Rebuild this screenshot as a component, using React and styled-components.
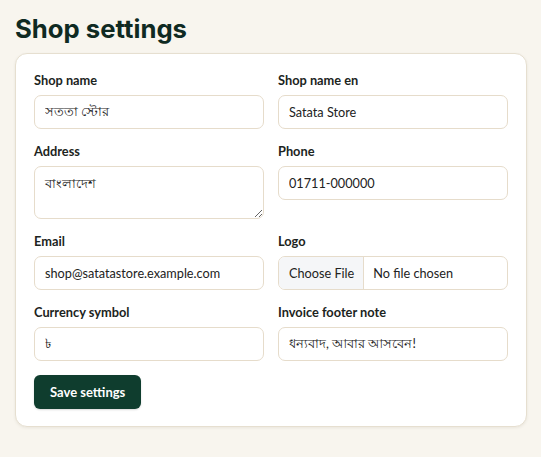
import React from "react";
import styled, { createGlobalStyle } from "styled-components";

const Global = createGlobalStyle`
  html, body { margin: 0; padding: 0; background: #f8f5ee; }
  body { font-family: Lato, "Noto Sans", sans-serif; color: #1c2421; }
  * { box-sizing: border-box; }
`;

const Page = styled.div`
  padding: 14px 15px 30px 15px;
`;

const Title = styled.h1`
  margin: 0 0 9px 0;
  font-family: Inter, "Noto Sans", sans-serif;
  font-weight: 700;
  font-size: 25.7px;
  line-height: 30px;
  letter-spacing: 0;
  color: #0f2a22;
`;

const Card = styled.form`
  width: 512px;
  background: #ffffff;
  border: 1px solid #e6dfd0;
  border-radius: 12px;
  padding: 17px 18px 17px 18px;
  box-shadow: 0 1px 3px rgba(60, 50, 30, 0.08);
`;

const Grid = styled.div`
  display: grid;
  grid-template-columns: 1fr 1fr;
  column-gap: 14px;
  row-gap: 13px;
  align-items: start;
`;

const Field = styled.label`
  display: flex;
  flex-direction: column;
  gap: 6px;
`;

const Label = styled.span`
  font-size: 12.8px;
  font-weight: 700;
  line-height: 18px;
  color: #1c2421;
`;

const fieldBase = `
  width: 100%;
  border: 1px solid #e6dccb;
  border-radius: 7px;
  background: #fff;
  font-family: Lato, "Noto Sans", sans-serif;
  font-size: 12.7px;
  color: #222;
  outline: none;
`;

const Input = styled.input`
  ${fieldBase}
  height: 34px;
  padding: 0 10px;
`;

const TextArea = styled.textarea`
  ${fieldBase}
  height: 53px;
  padding: 7px 10px;
  line-height: 18px;
  resize: vertical;
  display: block;
`;

const FileInput = styled.input`
  ${fieldBase}
  height: 34px;
  padding: 0;
  overflow: hidden;
  &::file-selector-button {
    height: 32px;
    padding: 0 9px 0 10px;
    margin-right: 9px;
    border: none;
    border-right: 1px solid #e6dccb;
    background: #f5f6f8;
    font-family: Lato, "Noto Sans", sans-serif;
    font-size: 12.7px;
    color: #222;
  }
`;

const Actions = styled.div`
  margin-top: 14px;
  display: flex;
`;

const Button = styled.button`
  height: 34px;
  padding: 0 16px;
  border: none;
  border-radius: 6px;
  background: #0f3d2e;
  color: #fff;
  font-family: Lato, "Noto Sans", sans-serif;
  font-weight: 700;
  font-size: 13px;
  box-shadow: 0 1px 2px rgba(0,0,0,0.15);
`;

export default function App() {
  return (
    <>
      <Global />
      <Page>
        <Title>Shop settings</Title>
        <Card onSubmit={(e) => e.preventDefault()}>
          <Grid>
            <Field>
              <Label>Shop name</Label>
              <Input defaultValue="সততা স্টোর" />
            </Field>
            <Field>
              <Label>Shop name en</Label>
              <Input defaultValue="Satata Store" />
            </Field>
            <Field>
              <Label>Address</Label>
              <TextArea defaultValue="বাংলাদেশ" />
            </Field>
            <Field>
              <Label>Phone</Label>
              <Input defaultValue="01711-000000" />
            </Field>
            <Field>
              <Label>Email</Label>
              <Input defaultValue="shop@satatastore.example.com" />
            </Field>
            <Field>
              <Label>Logo</Label>
              <FileInput type="file" />
            </Field>
            <Field>
              <Label>Currency symbol</Label>
              <Input defaultValue="৳" />
            </Field>
            <Field>
              <Label>Invoice footer note</Label>
              <Input defaultValue="ধন্যবাদ, আবার আসবেন!" />
            </Field>
          </Grid>
          <Actions>
            <Button type="submit">Save settings</Button>
          </Actions>
        </Card>
      </Page>
    </>
  );
}
